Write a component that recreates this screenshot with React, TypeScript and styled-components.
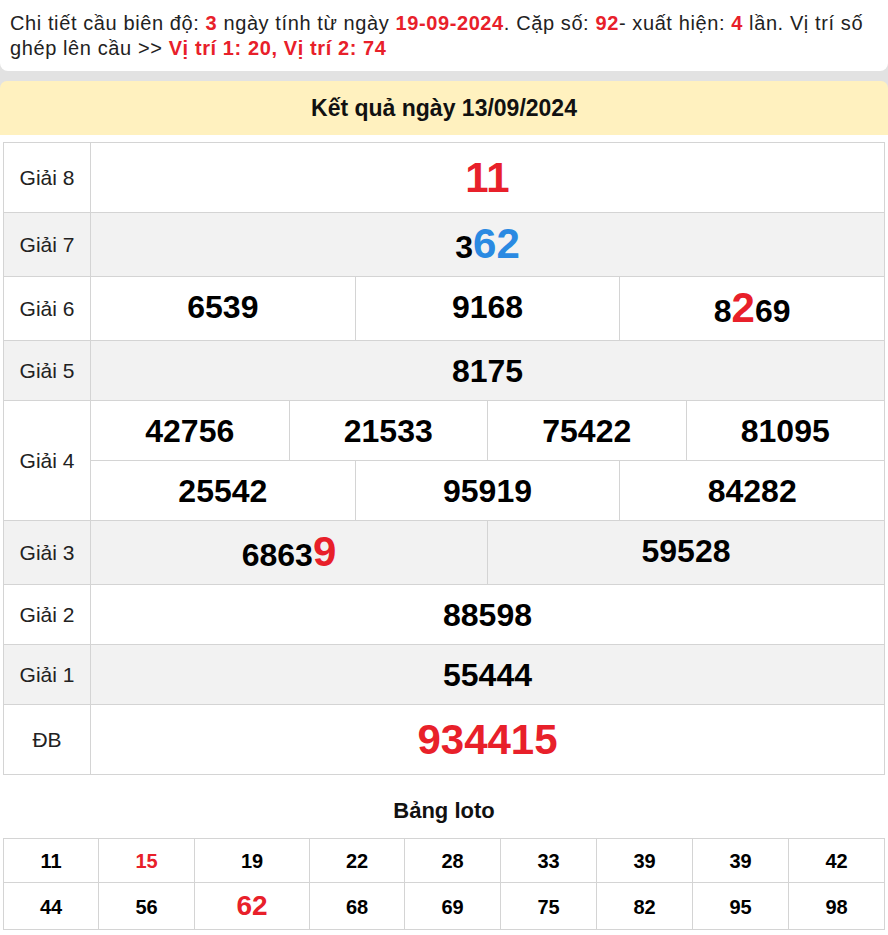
import React from "react";
import styled, { createGlobalStyle } from "styled-components";

const RED = "#e8202a";
const BLUE = "#2a8ae2";
const LINE = "#d4d4d4";

const GlobalStyle = createGlobalStyle`
  html, body {
    margin: 0;
    padding: 0;
    background: #fff;
  }
  body {
    font-family: "Liberation Sans", Arial, sans-serif;
    color: #111;
  }
`;

const Page = styled.div`
  width: 888px;
`;

const Backdrop = styled.div`
  background: #e2e2e2;
  display: flex;
  flex-direction: column;
  gap: 10px;
`;

const InfoCard = styled.div`
  background: #fff;
  border-radius: 0 0 8px 8px;
  padding: 11px 10px 10px;
  font-size: 20px;
  letter-spacing: 0.6px;
  line-height: 25px;
  color: #222;
`;

const Hot = styled.span`
  color: ${RED};
  font-weight: bold;
`;

const DayHeader = styled.div`
  background: #fff1bf;
  border-radius: 7px 7px 0 0;
  height: 54px;
  display: flex;
  align-items: center;
  justify-content: center;
  font-size: 23px;
  font-weight: bold;
  color: #111;
`;

const Body = styled.div`
  padding: 7px 3px 0;
`;

const ResultTable = styled.table`
  width: 100%;
  border-collapse: collapse;
  table-layout: fixed;
`;

const Row = styled.tr<{ $shade?: boolean }>`
  background: ${({ $shade }) => ($shade ? "#f2f2f2" : "#fff")};
`;

const Label = styled.td`
  width: 86px;
  border: 1px solid ${LINE};
  text-align: center;
  font-size: 21px;
  color: #222;
  padding: 0;
`;

const Prize = styled.td`
  border: 1px solid ${LINE};
  padding: 0;
`;

const NumRow = styled.div`
  display: flex;
`;

const Num = styled.div<{ $size: number; $color?: string }>`
  flex: 1;
  text-align: center;
  font-weight: bold;
  font-size: ${({ $size }) => $size}px;
  line-height: ${({ $size }) => $size}px;
  padding: 13.5px 0;
  color: ${({ $color }) => $color || "#000"};
  & + & {
    border-left: 1px solid ${LINE};
  }
`;

const Big = styled.span<{ $color: string }>`
  font-size: 42px;
  line-height: 33px;
  color: ${({ $color }) => $color};
`;

const LotoTitle = styled.div`
  margin: 23px 0 14px;
  text-align: center;
  font-size: 22px;
  line-height: 26px;
  font-weight: bold;
  color: #111;
`;

const LotoTable = styled.table`
  width: 100%;
  border-collapse: collapse;
  table-layout: fixed;
`;

const LotoCol = styled.col<{ $w: number }>`
  width: ${({ $w }) => $w}px;
`;

const LotoCell = styled.td<{ $hot?: boolean }>`
  border: 1px solid ${LINE};
  text-align: center;
  font-weight: bold;
  font-size: 20px;
  line-height: 20px;
  padding: 12px 0 11px;
  color: ${({ $hot }) => ($hot ? RED : "#000")};
`;

const LotoBig = styled.span`
  font-size: 28px;
  line-height: 22px;
  color: ${RED};
`;

type Cell = React.ReactNode;

const Prizes = ({ items, size = 32, color }: { items: Cell[]; size?: number; color?: string }) => (
  <NumRow>
    {items.map((n, i) => (
      <Num key={i} $size={size} $color={color}>
        {n}
      </Num>
    ))}
  </NumRow>
);

const lotoCols = [95, 96, 115, 95, 96, 96, 96, 96, 96];

const lotoRows: { v: string; hot?: boolean; big?: boolean }[][] = [
  [
    { v: "11" },
    { v: "15", hot: true },
    { v: "19" },
    { v: "22" },
    { v: "28" },
    { v: "33" },
    { v: "39" },
    { v: "39" },
    { v: "42" },
  ],
  [
    { v: "44" },
    { v: "56" },
    { v: "62", big: true },
    { v: "68" },
    { v: "69" },
    { v: "75" },
    { v: "82" },
    { v: "95" },
    { v: "98" },
  ],
];

export default function App() {
  return (
    <Page>
      <GlobalStyle />
      <Backdrop>
        <InfoCard>
          Chi tiết cầu biên độ: <Hot>3</Hot> ngày tính từ ngày <Hot>19-09-2024</Hot>. Cặp số:{" "}
          <Hot>92</Hot>- xuất hiện: <Hot>4</Hot> lần. Vị trí số ghép lên cầu &gt;&gt;{" "}
          <Hot>Vị trí 1: 20, Vị trí 2: 74</Hot>
        </InfoCard>
        <DayHeader>Kết quả ngày 13/09/2024</DayHeader>
      </Backdrop>
      <Body>
        <ResultTable>
          <tbody>
            <Row>
              <Label>Giải 8</Label>
              <Prize>
                <Prizes items={["11"]} size={42} color={RED} />
              </Prize>
            </Row>
            <Row $shade>
              <Label>Giải 7</Label>
              <Prize>
                <Prizes
                  items={[
                    <>
                      3<Big $color={BLUE}>62</Big>
                    </>,
                  ]}
                />
              </Prize>
            </Row>
            <Row>
              <Label>Giải 6</Label>
              <Prize>
                <Prizes
                  items={[
                    "6539",
                    "9168",
                    <>
                      8<Big $color={RED}>2</Big>69
                    </>,
                  ]}
                />
              </Prize>
            </Row>
            <Row $shade>
              <Label>Giải 5</Label>
              <Prize>
                <Prizes items={["8175"]} />
              </Prize>
            </Row>
            <Row>
              <Label rowSpan={2}>Giải 4</Label>
              <Prize>
                <Prizes items={["42756", "21533", "75422", "81095"]} />
              </Prize>
            </Row>
            <Row>
              <Prize>
                <Prizes items={["25542", "95919", "84282"]} />
              </Prize>
            </Row>
            <Row $shade>
              <Label>Giải 3</Label>
              <Prize>
                <Prizes
                  items={[
                    <>
                      6863<Big $color={RED}>9</Big>
                    </>,
                    "59528",
                  ]}
                />
              </Prize>
            </Row>
            <Row>
              <Label>Giải 2</Label>
              <Prize>
                <Prizes items={["88598"]} />
              </Prize>
            </Row>
            <Row $shade>
              <Label>Giải 1</Label>
              <Prize>
                <Prizes items={["55444"]} />
              </Prize>
            </Row>
            <Row>
              <Label>ĐB</Label>
              <Prize>
                <Prizes items={["934415"]} size={42} color={RED} />
              </Prize>
            </Row>
          </tbody>
        </ResultTable>

        <LotoTitle>Bảng loto</LotoTitle>
        <LotoTable>
          <colgroup>
            {lotoCols.map((w, i) => (
              <LotoCol key={i} $w={w} />
            ))}
          </colgroup>
          <tbody>
            {lotoRows.map((row, r) => (
              <tr key={r}>
                {row.map((c, i) => (
                  <LotoCell key={i} $hot={c.hot}>
                    {c.big ? <LotoBig>{c.v}</LotoBig> : c.v}
                  </LotoCell>
                ))}
              </tr>
            ))}
          </tbody>
        </LotoTable>
      </Body>
    </Page>
  );
}
